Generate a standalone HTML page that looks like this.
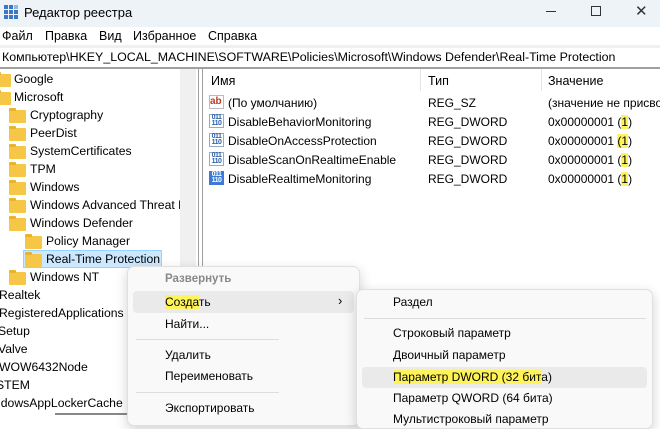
<!DOCTYPE html>
<html><head><meta charset="utf-8"><style>
*{margin:0;padding:0;box-sizing:border-box}
body{width:660px;height:419px;overflow:hidden;position:relative;background:#fff;font-family:"Liberation Sans",sans-serif;font-size:12px;color:#000}
.a{position:absolute;white-space:nowrap}
.t .a{font-size:12.2px}
.f{position:absolute;width:17px;height:13px;background:#f6c646;border-radius:1px}
.f:before{content:"";position:absolute;left:0;top:-2px;width:7px;height:3px;background:#e8b330;border-radius:1px 1px 0 0}
.hl{background:#fff35a}
.ic{position:absolute;width:15px;height:14px;border:1px solid #9ab;background:#fff;font-size:7px;line-height:6px;color:#2b5fa8;font-weight:bold;text-align:center;letter-spacing:-.5px}
</style></head><body>
<div class="a" style="left:0;top:0;width:660px;height:27px;background:#eef3f8"></div>
<svg class="a" style="left:4px;top:5px" width="14" height="14"><g fill="#3a78c9"><rect x="0" y="0" width="4" height="4"/><rect x="5" y="0" width="4" height="4"/><rect x="10" y="0" width="4" height="4" fill="#8fb8e8"/><rect x="0" y="5" width="4" height="4"/><rect x="5" y="5" width="4" height="4"/><rect x="10" y="5" width="4" height="4"/><rect x="0" y="10" width="4" height="4"/><rect x="5" y="10" width="4" height="4"/><rect x="10" y="10" width="4" height="4"/></g></svg>
<div class="a" style="left:24px;top:5px;font-size:13px">Редактор реестра</div>
<div class="a" style="left:546px;top:11px;width:10px;height:1px;background:#333"></div>
<div class="a" style="left:591px;top:6px;width:10px;height:10px;border:1px solid #333"></div>
<div class="a" style="left:635px;top:2px;font-size:15px;color:#333">✕</div>
<div class="a" style="left:2px;top:29px;font-size:12.5px">Файл</div>
<div class="a" style="left:45px;top:29px;font-size:12.5px">Правка</div>
<div class="a" style="left:99px;top:29px;font-size:12.5px">Вид</div>
<div class="a" style="left:133px;top:29px;font-size:12.5px">Избранное</div>
<div class="a" style="left:208px;top:29px;font-size:12.5px">Справка</div>
<div class="a" style="left:0;top:45px;width:660px;height:3px;background:#f0f0f0"></div>
<div class="a" style="left:2px;top:50px;font-size:12.4px">Компьютер\HKEY_LOCAL_MACHINE\SOFTWARE\Policies\Microsoft\Windows Defender\Real-Time Protection</div>
<div class="a" style="left:0;top:67px;width:660px;height:2px;background:#a0a0a0"></div>
<div class="a t" style="left:0;top:0;width:180px;height:419px;overflow:hidden">
<div class="f" style="left:-6px;top:74px"></div><div class="a" style="left:14px;top:72px">Google</div>
<div class="f" style="left:-6px;top:92px"></div><div class="a" style="left:14px;top:90px">Microsoft</div>
<div class="f" style="left:9px;top:110px"></div><div class="a" style="left:30px;top:108px">Cryptography</div>
<div class="f" style="left:9px;top:128px"></div><div class="a" style="left:30px;top:126px">PeerDist</div>
<div class="f" style="left:9px;top:146px"></div><div class="a" style="left:30px;top:144px">SystemCertificates</div>
<div class="f" style="left:9px;top:164px"></div><div class="a" style="left:30px;top:162px">TPM</div>
<div class="f" style="left:9px;top:182px"></div><div class="a" style="left:30px;top:180px">Windows</div>
<div class="f" style="left:9px;top:200px"></div><div class="a" style="left:30px;top:198px">Windows Advanced Threat P</div>
<div class="f" style="left:9px;top:218px"></div><div class="a" style="left:30px;top:216px">Windows Defender</div>
<div class="f" style="left:25px;top:236px"></div><div class="a" style="left:46px;top:234px">Policy Manager</div>
<div class="a" style="left:23px;top:250px;width:139px;height:18px;background:#cce8ff;border:1px solid #99d1ff"></div>
<div class="f" style="left:25px;top:254px"></div><div class="a" style="left:46px;top:252px">Real-Time Protection</div>
<div class="f" style="left:9px;top:272px"></div><div class="a" style="left:30px;top:270px">Windows NT</div>
<div class="a" style="left:-1px;top:288px">Realtek</div>
<div class="a" style="left:-1px;top:306px">RegisteredApplications</div>
<div class="a" style="left:-2px;top:324px">Setup</div>
<div class="a" style="left:-2px;top:342px">Valve</div>
<div class="a" style="left:-1px;top:360px">WOW6432Node</div>
<div class="a" style="left:-4px;top:378px">STEM</div>
<div class="a" style="left:-6px;top:396px">ndowsAppLockerCache</div>
</div>
<div class="a" style="left:180px;top:69px;width:16px;height:350px;background:#f0f0f0"></div>
<div class="a" style="left:198px;top:69px;width:1px;height:350px;background:#a0a0a0"></div>
<div class="a" style="left:202px;top:69px;width:1px;height:350px;background:#a0a0a0"></div>
<div class="a" style="left:55px;top:413px;width:75px;height:2px;background:#888"></div>
<div class="a" style="left:211px;top:74px;font-size:12.5px">Имя</div>
<div class="a" style="left:428px;top:74px;font-size:12.5px">Тип</div>
<div class="a" style="left:420px;top:69px;width:1px;height:22px;background:#e5e5e5"></div>
<div class="a" style="left:541px;top:69px;width:1px;height:22px;background:#e5e5e5"></div>
<div class="a" style="left:548px;top:74px;font-size:12.5px">Значение</div>
<div class="a" style="left:209px;top:95px;width:15px;height:14px;border:1px solid #bbb;font-size:10px;color:#c03a20;font-weight:bold;line-height:11px">ab</div>
<div class="a" style="left:228px;top:96px">(По умолчанию)</div><div class="a" style="left:428px;top:96px">REG_SZ</div><div class="a" style="left:548px;top:96px">(значение не присвоено)</div>
<div class="ic" style="left:209px;top:114px">011<br>110</div>
<div class="a" style="left:228px;top:115px">DisableBehaviorMonitoring</div><div class="a" style="left:428px;top:115px">REG_DWORD</div><div class="a" style="left:548px;top:115px">0x00000001 (<span class="hl">1</span>)</div>
<div class="ic" style="left:209px;top:133px">011<br>110</div>
<div class="a" style="left:228px;top:134px">DisableOnAccessProtection</div><div class="a" style="left:428px;top:134px">REG_DWORD</div><div class="a" style="left:548px;top:134px">0x00000001 <span class="hl">(1</span>)</div>
<div class="ic" style="left:209px;top:152px">011<br>110</div>
<div class="a" style="left:228px;top:153px">DisableScanOnRealtimeEnable</div><div class="a" style="left:428px;top:153px">REG_DWORD</div><div class="a" style="left:548px;top:153px">0x00000001 (<span class="hl">1</span>)</div>
<div class="ic" style="left:209px;top:171px;background:#3d7ad6;color:#fff;border-color:#3d7ad6">011<br>110</div>
<div class="a" style="left:228px;top:172px">DisableRealtimeMonitoring</div><div class="a" style="left:428px;top:172px">REG_DWORD</div><div class="a" style="left:548px;top:172px">0x00000001 (<span class="hl">1</span>)</div>
<div class="a" style="left:127px;top:266px;width:233px;height:160px;background:#f9f9f9;border:1px solid #e0e0e0;border-radius:7px;box-shadow:0 4px 12px rgba(0,0,0,.18)"></div>
<div class="a" style="left:165px;top:273px;color:#888;font-weight:bold;font-size:11.5px">Развернуть</div>
<div class="a" style="left:133px;top:291px;width:221px;height:22px;background:#eaeaea;border-radius:4px"></div>
<div class="a" style="left:165px;top:295px"><span class="hl">Созда</span>ть</div>
<div class="a" style="left:338px;top:293px;font-size:13px">›</div>
<div class="a" style="left:165px;top:317px">Найти...</div>
<div class="a" style="left:136px;top:339px;width:143px;height:1px;background:#ddd"></div>
<div class="a" style="left:165px;top:348px">Удалить</div>
<div class="a" style="left:165px;top:369px">Переименовать</div>
<div class="a" style="left:136px;top:392px;width:143px;height:1px;background:#ddd"></div>
<div class="a" style="left:165px;top:401px">Экспортировать</div>
<div class="a" style="left:356px;top:289px;width:297px;height:140px;background:#f9f9f9;border:1px solid #e0e0e0;border-radius:7px;box-shadow:0 4px 12px rgba(0,0,0,.18)"></div>
<div class="a" style="left:393px;top:295px">Раздел</div>
<div class="a" style="left:364px;top:318px;width:282px;height:1px;background:#ddd"></div>
<div class="a" style="left:393px;top:326px">Строковый параметр</div>
<div class="a" style="left:393px;top:348px">Двоичный параметр</div>
<div class="a" style="left:362px;top:367px;width:285px;height:21px;background:#eaeaea;border-radius:4px"></div>
<div class="a" style="left:393px;top:370px"><span class="hl">Параметр DWORD (32 бит</span>а)</div>
<div class="a" style="left:393px;top:391px">Параметр QWORD (64 бита)</div>
<div class="a" style="left:393px;top:412px">Мультистроковый параметр</div>
</body></html>
